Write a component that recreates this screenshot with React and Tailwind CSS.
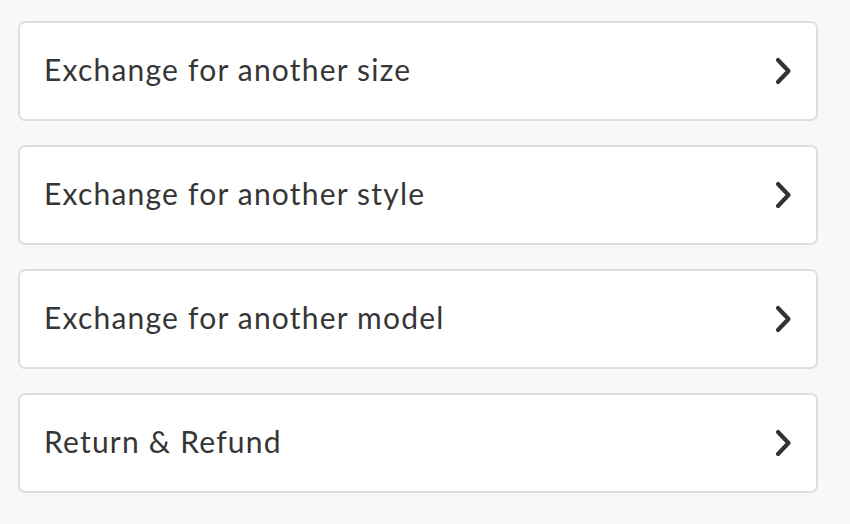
import React from "react";

const options = [
  "Exchange for another size",
  "Exchange for another style",
  "Exchange for another model",
  "Return & Refund",
];

function Chevron() {
  return (
    <svg width="20" height="30" viewBox="0 0 20 30" fill="none" className="shrink-0">
      <path
        d="M5 4 L15.5 15 L5 26"
        stroke="#333333"
        strokeWidth="4.2"
        strokeLinecap="round"
        strokeLinejoin="round"
      />
    </svg>
  );
}

export default function App() {
  return (
    <div
      className="w-[850px] h-[524px] bg-[#f8f8f8] pl-[18px] pt-[21px]"
      style={{ fontFamily: "Lato, 'Open Sans', sans-serif" }}
    >
      <div className="flex w-[800px] flex-col gap-[24px]">
        {options.map((label) => (
          <button
            key={label}
            className="flex h-[100px] items-center justify-between rounded-[7px] border-2 border-[#dedede] bg-white pl-[24px] pr-[23px] text-left"
          >
            <span className="mb-[4px] text-[30px] leading-none tracking-[1.2px] text-[#363636]">
              {label}
            </span>
            <Chevron />
          </button>
        ))}
      </div>
    </div>
  );
}
